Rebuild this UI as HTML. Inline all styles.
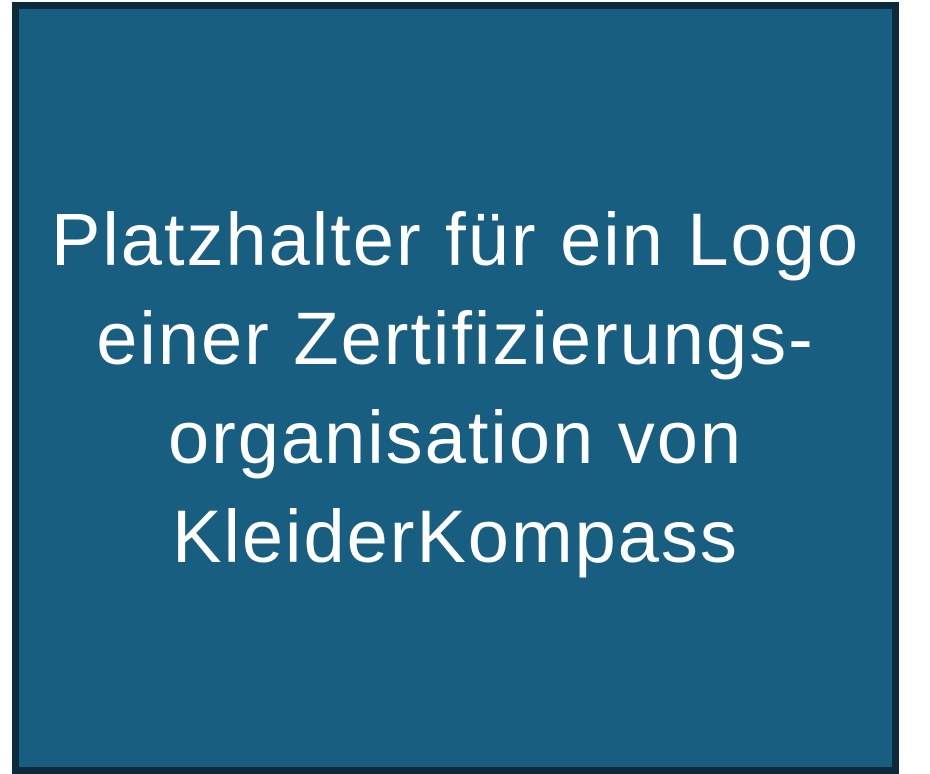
<!DOCTYPE html>
<html><head><meta charset="utf-8"><style>
html,body{margin:0;padding:0;background:#fff;width:930px;height:774px;overflow:hidden}
.box{position:absolute;left:12px;top:2px;width:873px;height:758px;border:7px solid #0b2a3b;background:#175e80}
.t{position:absolute;left:12px;width:887px;top:190px;text-align:center;color:#fff;font-family:"Liberation Sans",sans-serif;font-size:74px;letter-spacing:2px;line-height:99px;white-space:nowrap}
</style></head><body>
<div class="box"></div>
<div class="t">Platzhalter für ein Logo<br>einer Zertifizierungs-<br>organisation von<br>KleiderKompass</div>
</body></html>
